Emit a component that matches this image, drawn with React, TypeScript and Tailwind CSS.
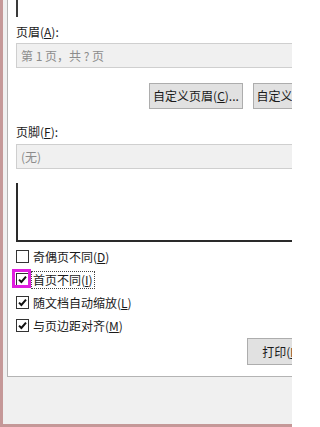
import React from 'react';

const font = { fontFamily: '"Noto Sans CJK SC", "Noto Sans", sans-serif' };

function Check({ checked }: { checked: boolean }) {
  return (
    <span className="flex h-[13px] w-[13px] items-center justify-center border border-[#333333] bg-white">
      {checked && (
        <svg width="9" height="9" viewBox="0 0 9 9">
          <path d="M1 4.6 L3.4 7 L8 1.6" fill="none" stroke="#111" strokeWidth="2" />
        </svg>
      )}
    </span>
  );
}

function Option({
  label,
  hot,
  checked,
  focused,
}: {
  label: string;
  hot: string;
  checked: boolean;
  focused?: boolean;
}) {
  return (
    <div className="flex h-[23px] items-center">
      <span className="relative">
        <Check checked={checked} />
        {focused && (
          <span className="absolute -left-[4px] -top-[4px] h-[19px] w-[19px] border-[3px] border-[#e01ee0]" />
        )}
      </span>
      <span
        className={
          focused
            ? 'ml-[2px] border border-dotted border-[#444] px-[1px] leading-[16px]'
            : 'ml-[4px] leading-[16px]'
        }
      >
        {label}(<span className="underline">{hot}</span>)
      </span>
    </div>
  );
}

export default function App() {
  return (
    <div
      className="flex h-[427px] w-[292px] overflow-hidden bg-[#c59898] text-[12px] text-[#1a1a1a]"
      style={font}
    >
      <div className="ml-[3px] flex h-[424px] flex-1 flex-col bg-[#f0f0f0] pl-[4px]">
        <div className="w-[400px] border-b border-l border-[#b4b4b4] bg-white pb-[11px] pl-[8px]">
          <div className="h-[17px] border-l-2 border-[#3a3a3a]" />

          <div className="mt-[7px] leading-[16px]">
            页眉(<span className="underline">A</span>):
          </div>
          <div className="mt-[3px] flex h-[25px] items-center border border-[#cfcfcf] bg-[#f0f0f0] pl-[4px] text-[#8c8c8c]">
            第 1 页，共 ? 页
          </div>

          <div className="mt-[15px] flex gap-[10px] pl-[133px]">
            <button className="h-[26px] w-[94px] border border-[#adadad] bg-[#e1e1e1]">
              自定义页眉(<span className="underline">C</span>)...
            </button>
            <button className="h-[26px] w-[94px] border border-[#adadad] bg-[#e1e1e1]">
              自定义页脚(<span className="underline">U</span>)...
            </button>
          </div>

          <div className="mt-[15px] leading-[16px]">
            页脚(<span className="underline">F</span>):
          </div>
          <div className="mt-[4px] flex h-[25px] items-center border border-[#cfcfcf] bg-[#f0f0f0] pl-[4px] text-[#8c8c8c]">
            (无)
          </div>

          <div className="mt-[14px] h-[59px] border-b-2 border-l-2 border-[#2a2a2a]" />

          <div className="mt-[3px] flex flex-col">
            <Option label="奇偶页不同" hot="D" checked={false} />
            <Option label="首页不同" hot="I" checked focused />
            <Option label="随文档自动缩放" hot="L" checked />
            <Option label="与页边距对齐" hot="M" checked />
          </div>

          <div className="mt-[1px] flex pl-[231px]">
            <button className="h-[27px] w-[80px] border border-[#adadad] bg-[#e1e1e1]">
              打印(<span className="underline">P</span>)...
            </button>
          </div>
        </div>
      </div>
    </div>
  );
}
